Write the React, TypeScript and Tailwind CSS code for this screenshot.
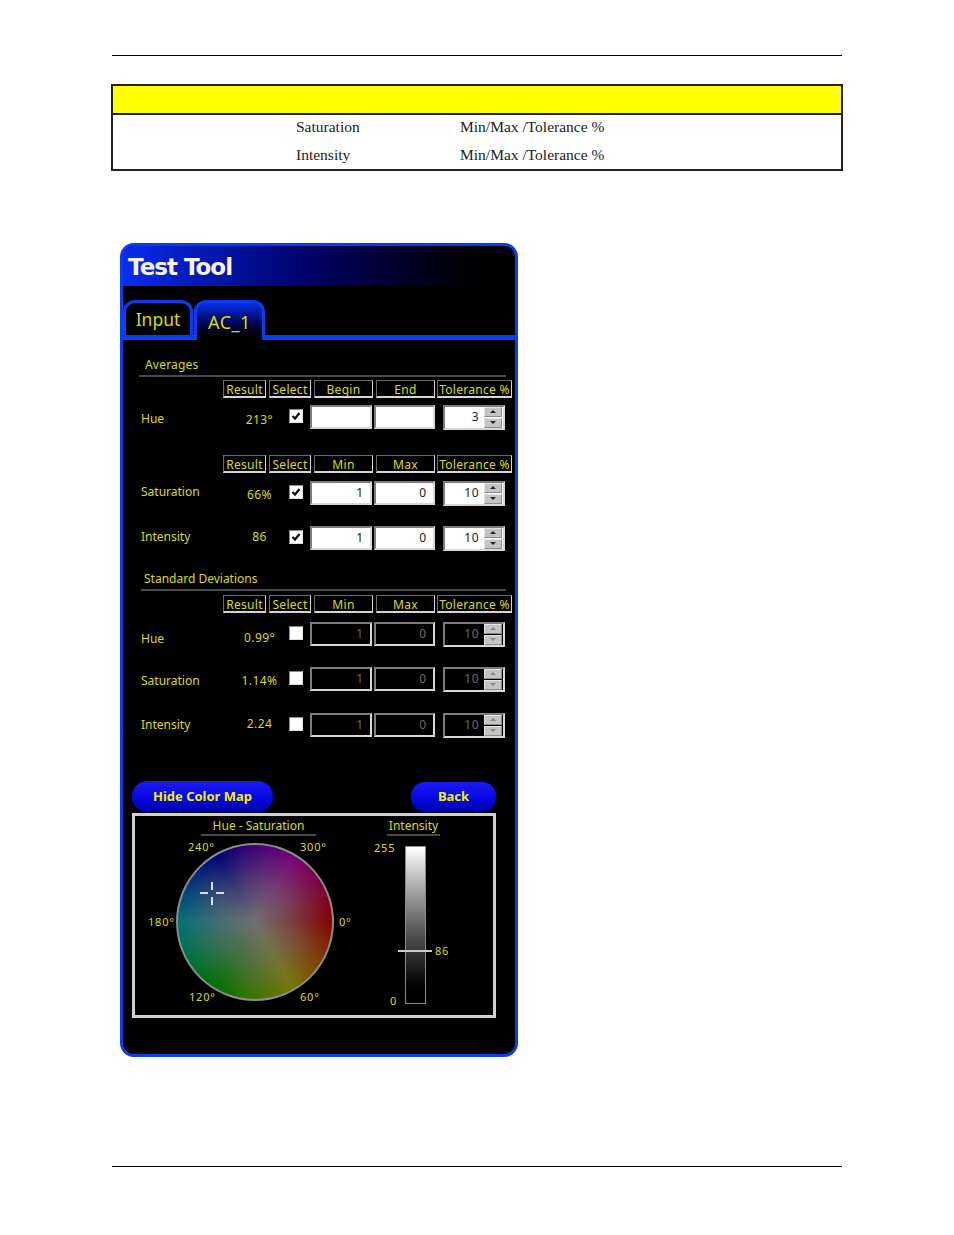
const ui = { fontFamily: '"Noto Sans", "Liberation Sans", sans-serif' };

function HeaderRow({ middle }: { middle: [string, string] }) {
  const cell =
    "flex h-[18px] items-end justify-center overflow-hidden border border-t-[#6a6a6a] border-l-[#6a6a6a] border-r-[#d4d4d4] border-b-[2px] border-b-[#d4d4d4] text-[12px] leading-[12px] tracking-[0.3px] text-[#dcdc00]";
  return (
    <div className="flex pl-[100px]">
      <div className={`${cell} w-[43px]`}>Result</div>
      <div className={`${cell} ml-[3px] w-[42px]`}>Select</div>
      <div className={`${cell} ml-[3px] w-[59px]`}>{middle[0]}</div>
      <div className={`${cell} ml-[3px] w-[59px]`}>{middle[1]}</div>
      <div className={`${cell} ml-[2px] w-[75px]`}>Tolerance %</div>
    </div>
  );
}

function Field({ value, off, width }: { value?: string; off?: boolean; width: string }) {
  return (
    <div
      className={`flex h-[24px] items-center justify-end border-2 border-t-[#7c7c7c] border-l-[#7c7c7c] border-r-[#d8d8d8] border-b-[#d8d8d8] pr-[7px] text-[12px] ${width} ${
        off ? "bg-black text-[#6a6a6a]" : "bg-white text-[#222222]"
      }`}
    >
      {value}
    </div>
  );
}

function Spinner({ value, off }: { value: string; off?: boolean }) {
  const btn =
    "flex h-[10px] w-[18px] items-center justify-center border border-t-[#e4e4e4] border-l-[#e4e4e4] border-r-[#8c8c8c] border-b-[#8c8c8c] bg-[#c4c4c4]";
  return (
    <div
      className={`flex h-[25px] w-[62px] items-center justify-between border-2 border-t-[#7c7c7c] border-l-[#7c7c7c] border-r-[#d8d8d8] border-b-[#d8d8d8] pr-[1px] text-[12px] tracking-[0.5px] ${
        off ? "bg-black text-[#6a6a6a]" : "bg-white text-[#222222]"
      }`}
    >
      <span className="w-[34px] text-right">{value}</span>
      <div className="flex flex-col gap-px">
        <div className={btn}>
          <svg width="6" height="3" viewBox="0 0 6 3">
            <path d="M3 0 L6 3 L0 3 Z" fill={off ? "#888888" : "#222222"} />
          </svg>
        </div>
        <div className={btn}>
          <svg width="6" height="3" viewBox="0 0 6 3">
            <path d="M0 0 L6 0 L3 3 Z" fill={off ? "#888888" : "#222222"} />
          </svg>
        </div>
      </div>
    </div>
  );
}

function Check({ on }: { on: boolean }) {
  return (
    <div className="mb-[2px] flex h-[14px] w-[14px] items-center justify-center border border-t-[#888888] border-l-[#888888] border-r-[#dddddd] border-b-[#dddddd] bg-white">
      {on && (
        <svg width="10" height="10" viewBox="0 0 10 10">
          <path d="M1.5 5 L4 7.5 L8.5 2" fill="none" stroke="#111111" strokeWidth="2.2" />
        </svg>
      )}
    </div>
  );
}

type RowProps = {
  label: string;
  result: string;
  on: boolean;
  min?: string;
  max?: string;
  tol: string;
  className: string;
  labelNudge?: string;
  resultNudge?: string;
};

function DataRow({ label, result, on, min, max, tol, className, labelNudge = "", resultNudge = "" }: RowProps) {
  return (
    <div className={`flex h-[24px] items-center pl-[18px] text-[12px] text-[#dcdc00] ${className}`}>
      <div className={`w-[89px] ${labelNudge}`}>{label}</div>
      <div className={`w-[59px] whitespace-nowrap text-center tracking-[0.4px] ${resultNudge}`}>{result}</div>
      <Check on={on} />
      <div className="ml-[7px]">
        <Field value={min} off={!on} width="w-[62px]" />
      </div>
      <div className="ml-[2px]">
        <Field value={max} off={!on} width="w-[61px]" />
      </div>
      <div className="ml-[8px]">
        <Spinner value={tol} off={!on} />
      </div>
    </div>
  );
}

function ColorMap() {
  const tick = "absolute text-[11px] leading-[12px] tracking-[0.8px] text-[#dcdc00]";
  return (
    <div className="ml-[9px] mt-[1px] h-[205px] w-[364px] border-[3px] border-[#d0d0d0] bg-black">
      <div className="flex">
        <div className="w-[252px]">
          <div className="ml-[66px] mt-[2px] h-[18px] w-[115px] border-b-2 border-[#4a4a4a] text-center text-[12px] leading-[16px] text-[#dcdc00]">
            Hue - Saturation
          </div>
          <div className="relative ml-[41px] mt-[7px] h-[158px] w-[158px] rounded-full border-2 border-[#8a8a8a] bg-[radial-gradient(circle_closest-side,#707070_0%,rgba(112,112,112,0.55)_50%,rgba(112,112,112,0)_100%),conic-gradient(from_90deg,#860000,#787800,#007000,#007078,#000078,#780078,#860000)]">
            <span className={`${tick} left-[10px] top-[-4px]`}>240°</span>
            <span className={`${tick} left-[122px] top-[-4px]`}>300°</span>
            <span className={`${tick} left-[-30px] top-[71px]`}>180°</span>
            <span className={`${tick} left-[161px] top-[71px]`}>0°</span>
            <span className={`${tick} left-[11px] top-[146px]`}>120°</span>
            <span className={`${tick} left-[122px] top-[146px]`}>60°</span>
            <div className="absolute left-[22px] top-[47px] h-[2px] w-[8px] bg-[#dddddd]" />
            <div className="absolute left-[38px] top-[47px] h-[2px] w-[8px] bg-[#dddddd]" />
            <div className="absolute left-[33px] top-[37px] h-[8px] w-[2px] bg-[#dddddd]" />
            <div className="absolute left-[33px] top-[52px] h-[8px] w-[2px] bg-[#dddddd]" />
          </div>
        </div>
        <div className="w-[53px]">
          <div className="mt-[2px] h-[18px] border-b-2 border-[#4a4a4a] text-center text-[12px] leading-[16px] text-[#dcdc00]">
            Intensity
          </div>
          <div className="relative ml-[18px] mt-[10px] h-[158px] w-[21px] border border-[#8a8a8a] bg-gradient-to-b from-white to-black">
            <span className={`${tick} left-[-32px] top-[-5px]`}>255</span>
            <span className={`${tick} left-[-16px] top-[148px]`}>0</span>
            <span className={`${tick} left-[29px] top-[98px]`}>86</span>
            <div className="absolute left-[-8px] top-[103px] h-[2px] w-[34px] bg-[#cccccc]" />
          </div>
        </div>
      </div>
    </div>
  );
}

function TestTool() {
  return (
    <div
      className="ml-[120px] mt-[72px] h-[814px] w-[398px] overflow-hidden rounded-[14px] border-[3px] border-[#0a3cf0] bg-black"
      style={ui}
    >
      <div className="flex h-[40px] items-center bg-gradient-to-r from-[#0a2cf0] via-[#000060] to-black pl-[5px] pt-[3px] font-['DejaVu_Sans'] text-[23px] font-bold tracking-[-1px] text-[#f5f2e0]">
        Test Tool
      </div>

      <div className="mt-[14px] flex h-[40px] items-start border-b-[5px] border-[#0a3cf0] text-[#dcdc00]">
        <div className="flex h-[35px] w-[70px] items-center justify-center rounded-t-[12px] border-x-[3px] border-t-[3px] border-[#0a3cf0] bg-black text-[17.5px]">
          Input
        </div>
        <div className="ml-[1px] -mb-[5px] flex h-[40px] w-[71px] items-center justify-center rounded-t-[12px] border-x-[3px] border-t-[3px] border-[#0a3cf0] bg-gradient-to-b from-[#0a2cf0] to-black pt-[2px] text-[18px] tracking-[0.5px]">
          AC_1
        </div>
      </div>

      <div className="ml-[22px] mt-[17px] h-[16px] text-[12px] leading-[16px] tracking-[0.2px] text-[#dcdc00]">Averages</div>
      <div className="ml-[16px] mt-[2px] h-[2px] w-[367px] bg-[#4a4a4a]" />
      <div className="mt-[3px]">
        <HeaderRow middle={["Begin", "End"]} />
      </div>
      <DataRow label="Hue" result="213°" on tol="3" className="mt-[7px]" labelNudge="mt-[4px]" resultNudge="mt-[6px]" />

      <div className="mt-[26px]">
        <HeaderRow middle={["Min", "Max"]} />
      </div>
      <DataRow label="Saturation" result="66%" on min="1" max="0" tol="10" className="mt-[8px]" labelNudge="mb-[2px]" resultNudge="mt-[4px]" />
      <DataRow label="Intensity" result="86" on min="1" max="0" tol="10" className="mt-[21px]" labelNudge="mb-[2px]" resultNudge="mb-[2px]" />

      <div className="ml-[21px] mt-[21px] h-[16px] text-[12px] leading-[16px] text-[#dcdc00]">
        Standard Deviations
      </div>
      <div className="ml-[18px] mt-[2px] h-[2px] w-[365px] bg-[#4a4a4a]" />
      <div className="mt-[4px]">
        <HeaderRow middle={["Min", "Max"]} />
      </div>
      <DataRow label="Hue" result="0.99°" on={false} min="1" max="0" tol="10" className="mt-[9px]" labelNudge="mt-[10px]" resultNudge="mt-[7px]" />
      <DataRow label="Saturation" result="1.14%" on={false} min="1" max="0" tol="10" className="mt-[21px]" labelNudge="mt-[4px]" resultNudge="mt-[4px]" />
      <DataRow label="Intensity" result="2.24" on={false} min="1" max="0" tol="10" className="mt-[22px]" resultNudge="mb-[2px]" />

      <div className="ml-[9px] mt-[44px] flex h-[31px] text-[13px] font-bold text-[#f0f000]">
        <button className="h-[31px] w-[141px] rounded-full bg-gradient-to-b from-[#1a1af0] via-[#0808e8] to-[#0000a8]">
          Hide Color Map
        </button>
        <button className="ml-[138px] mt-px h-[30px] w-[85px] rounded-[14px] bg-gradient-to-b from-[#1a1af0] via-[#0808e8] to-[#0000a8]">
          Back
        </button>
      </div>

      <ColorMap />
    </div>
  );
}

export default function App() {
  const serif = { fontFamily: '"Liberation Serif", serif' };
  return (
    <div className="h-[1235px] w-[954px] overflow-hidden bg-white pt-[55px]">
      <div className="ml-[112px] h-px w-[730px] bg-black" />

      <div className="ml-[111px] mt-[28px] h-[87px] w-[732px] border-2 border-[#222222] text-[15.5px] text-[#222222]" style={serif}>
        <div className="h-[29px] border-b-2 border-[#222222] bg-[#ffff00]" />
        <div className="flex h-[24px] items-center">
          <div className="ml-[183px] w-[164px]">Saturation</div>
          <div>Min/Max /Tolerance %</div>
        </div>
        <div className="mt-[4px] flex h-[24px] items-center">
          <div className="ml-[183px] w-[164px]">Intensity</div>
          <div>Min/Max /Tolerance %</div>
        </div>
      </div>

      <TestTool />

      <div className="ml-[112px] mt-[109px] h-px w-[730px] bg-black" />
    </div>
  );
}
